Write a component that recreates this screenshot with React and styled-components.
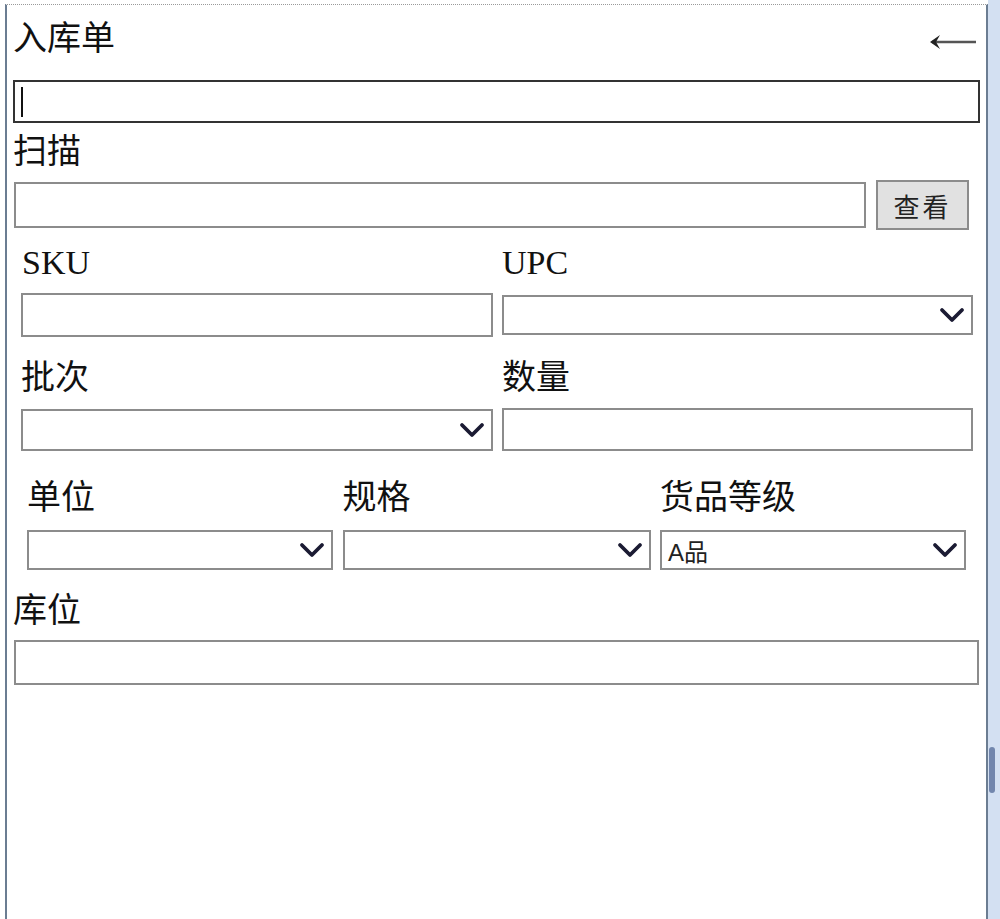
import styled, { createGlobalStyle } from "styled-components";

const GlobalStyle = createGlobalStyle`
  html, body {
    margin: 0;
    padding: 0;
    background: #fff;
  }
  body {
    font-family: "Liberation Serif", "Noto Sans CJK SC", serif;
    color: #111;
  }
`;

const Chevron = () => (
  <svg width="26" height="16" viewBox="0 0 26 16">
    <polyline
      points="3,3 13,13 23,3"
      fill="none"
      stroke="#1b1b33"
      strokeWidth="3.8"
      strokeLinecap="round"
      strokeLinejoin="round"
    />
  </svg>
);

const BackArrow = () => (
  <svg width="50" height="20" viewBox="0 0 50 20">
    <line x1="4" y1="10" x2="48" y2="10" stroke="#555" strokeWidth="2.5" />
    <path d="M2 10 L12 3 L8 10 L12 17 Z" fill="#222" />
  </svg>
);

const App = () => {
  return (
    <Page>
      <GlobalStyle />
      <Window>
        <Header>
          <Title>入库单</Title>
          <ArrowSlot>
            <BackArrow />
          </ArrowSlot>
        </Header>

        <FocusBox>
          <Caret />
        </FocusBox>

        <Label $mt={8}>扫描</Label>
        <ScanRow>
          <TextBox $h={46} />
          <Button>查看</Button>
        </ScanRow>

        <Grid2 $mt={12}>
          <Label $pl={1}>SKU</Label>
          <Label>UPC</Label>
        </Grid2>
        <Grid2 $mt={10} $h={44}>
          <TextBox $h={44} />
          <SelectBox $h={40}>
            <span />
            <Chevron />
          </SelectBox>
        </Grid2>

        <Grid2 $mt={20}>
          <Label>批次</Label>
          <Label>数量</Label>
        </Grid2>
        <Grid2 $mt={10} $h={43}>
          <SelectBox $h={42}>
            <span />
            <Chevron />
          </SelectBox>
          <TextBox $h={43} />
        </Grid2>

        <Grid3 $mt={26}>
          <Label>单位</Label>
          <Label $pl={-1}>规格</Label>
          <Label>货品等级</Label>
        </Grid3>
        <Grid3 $mt={12} $h={40}>
          <SelectBox $h={40}>
            <span />
            <Chevron />
          </SelectBox>
          <SelectBox $h={40}>
            <span />
            <Chevron />
          </SelectBox>
          <SelectBox $h={40}>
            <SelectValue>A品</SelectValue>
            <Chevron />
          </SelectBox>
        </Grid3>

        <Label $mt={20}>库位</Label>
        <WideBox $mt={9}>
          <TextBox $h={45} />
        </WideBox>
      </Window>
      <ScrollStrip>
        <Thumb />
      </ScrollStrip>
    </Page>
  );
};

export default App;

const Page = styled.div`
  display: flex;
  height: 919px;
  overflow: hidden;
  background: #fff;
`;

const Window = styled.div`
  flex: 1;
  margin: 4px 0 0 5px;
  border-top: 1px dotted #9a9a9a;
  border-left: 2px solid #6b7d92;
  border-right: 2px solid #6b7d92;
  padding: 13px 6px 0 6px;
  display: flex;
  flex-direction: column;
`;

const Header = styled.div`
  display: flex;
  justify-content: space-between;
  height: 41px;
`;

const Title = styled.div`
  font-size: 34px;
  line-height: 41px;
`;

const ArrowSlot = styled.div`
  margin: 14px 2px 0 0;
  height: 20px;
`;

const FocusBox = styled.div`
  margin-top: 21px;
  height: 43px;
  box-sizing: border-box;
  border: 2px solid #333;
  display: flex;
  align-items: center;
  padding-left: 6px;
`;

const Caret = styled.div`
  width: 2px;
  height: 30px;
  background: #111;
`;

const Label = styled.div`
  margin-top: ${(p) => p.$mt || 0}px;
  padding-left: ${(p) => p.$pl || 0}px;
  font-size: 34px;
  line-height: 41px;
  height: 41px;
  white-space: nowrap;
`;

const ScanRow = styled.div`
  margin-top: 8px;
  height: 50px;
  display: flex;
  align-items: center;
  padding-left: 1px;
`;

const TextBox = styled.div`
  flex: 1;
  height: ${(p) => p.$h}px;
  box-sizing: border-box;
  border: 2px solid #8c8c8c;
  background: #fff;
`;

const Button = styled.div`
  width: 93px;
  height: 50px;
  box-sizing: border-box;
  margin: 0 11px 0 10px;
  border: 2px solid #8c8c8c;
  background: #e1e1e1;
  display: flex;
  align-items: center;
  justify-content: center;
  font-family: "Noto Sans CJK SC", sans-serif;
  font-size: 26px;
  letter-spacing: 3px;
  color: #222;
`;

const Grid2 = styled.div`
  margin-top: ${(p) => p.$mt || 0}px;
  ${(p) => (p.$h ? `height: ${p.$h}px;` : "")}
  display: grid;
  grid-template-columns: 472px 471px;
  column-gap: 9px;
  padding-left: 8px;
  align-items: center;
`;

const Grid3 = styled.div`
  margin-top: ${(p) => p.$mt || 0}px;
  ${(p) => (p.$h ? `height: ${p.$h}px;` : "")}
  display: grid;
  grid-template-columns: 306px 308px 306px;
  column-gap: 9.5px;
  padding-left: 14px;
  align-items: center;
`;

const SelectBox = styled.div`
  height: ${(p) => p.$h}px;
  box-sizing: border-box;
  border: 2px solid #8c8c8c;
  background: #fff;
  display: flex;
  align-items: center;
  justify-content: space-between;
  padding: 0 6px;
`;

const SelectValue = styled.span`
  font-family: "Liberation Sans", "Noto Sans CJK SC", sans-serif;
  font-size: 24px;
  color: #222;
`;

const WideBox = styled.div`
  margin-top: ${(p) => p.$mt}px;
  display: flex;
  padding: 0 1px;
`;

const ScrollStrip = styled.div`
  width: 12px;
  background: #d3e0f2;
  display: flex;
  flex-direction: column;
`;

const Thumb = styled.div`
  margin-top: 747px;
  margin-left: 1px;
  width: 6px;
  height: 46px;
  border-radius: 3px;
  background: #7286ad;
`;
